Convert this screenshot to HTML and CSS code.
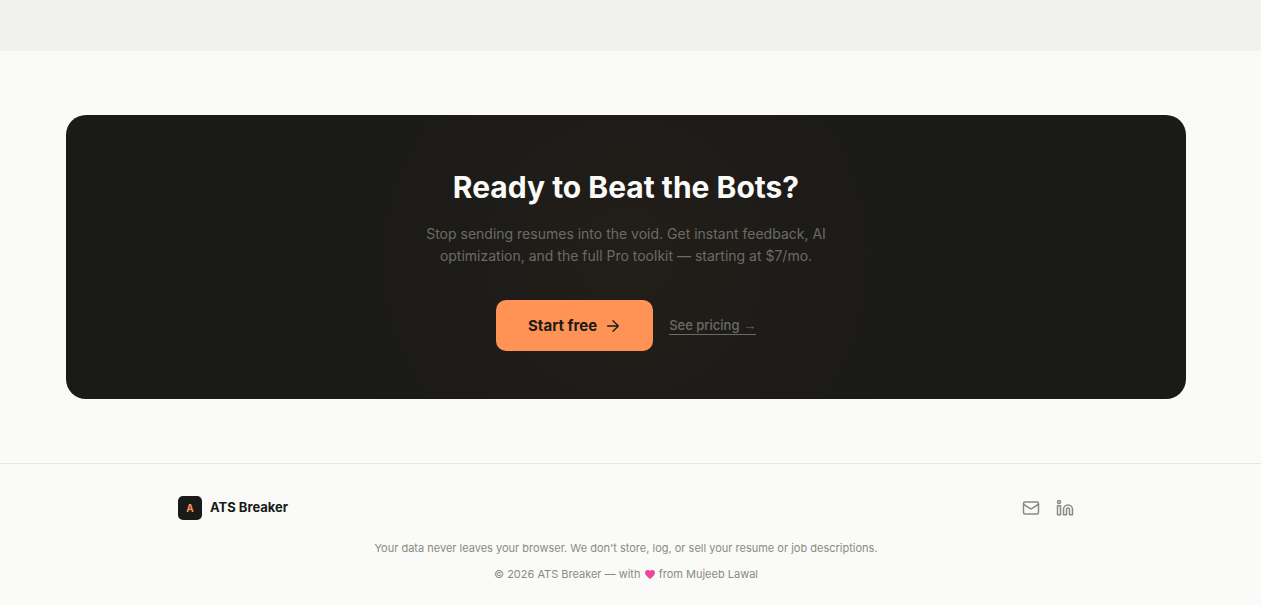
FILE: index.html
```html
<!DOCTYPE html>
<html lang="en">
<head>
<meta charset="utf-8">
<meta name="viewport" content="width=device-width, initial-scale=1">
<title>ATS Breaker</title>
<link rel="stylesheet" href="styles.css">
</head>
<body>
<div class="band"></div>
<main class="cta-section">
  <section class="cta">
    <h2 class="cta-title">Ready to Beat the Bots?</h2>
    <p class="cta-text">Stop sending resumes into the void. Get instant feedback, AI optimization, and the full Pro toolkit — starting at $7/mo.</p>
    <div class="cta-actions">
      <button class="start" type="button">Start free
        <svg width="16" height="16" viewBox="0 0 24 24" fill="none" stroke="currentColor" stroke-width="2" stroke-linecap="round" stroke-linejoin="round" aria-hidden="true"><path d="M4 12h16M12 4l8 8-8 8"/></svg>
      </button>
      <a class="pricing" href="#pricing">See pricing <span class="arrow">→</span></a>
    </div>
  </section>
</main>
<footer class="footer">
  <div class="footer-inner">
    <div class="footer-row">
      <a class="brand" href="#top"><span class="mark">A</span><span class="brand-name">ATS Breaker</span></a>
      <nav class="social" aria-label="Contact">
        <a href="#mail" aria-label="Email"><svg width="18" height="18" viewBox="0 0 24 24" fill="none" stroke="currentColor" stroke-width="2" stroke-linecap="round" stroke-linejoin="round"><rect x="2" y="4" width="20" height="16" rx="2"/><path d="M22 7l-8.970 5.700a1.940 1.940 0 0 1-2.060 0L2 7"/></svg></a>
        <a href="#linkedin" aria-label="LinkedIn"><svg width="18" height="18" viewBox="0 0 24 24" fill="none" stroke="currentColor" stroke-width="2" stroke-linecap="round" stroke-linejoin="round"><path d="M16 8a6 6 0 0 1 6 6v7h-4v-7a2 2 0 0 0-4 0v7h-4v-7a6 6 0 0 1 6-6z"/><rect x="2" y="9" width="4" height="12"/><circle cx="4" cy="4" r="2"/></svg></a>
      </nav>
    </div>
    <p class="note">Your data never leaves your browser. We don't store, log, or sell your resume or job descriptions.</p>
    <p class="note">© 2026 ATS Breaker — with <svg class="heart" width="10" height="9" viewBox="0 0 20 18" aria-label="love" role="img"><path d="M10 18C4 13 0 10 0 5.500C0 2 2.500 0 5.300 0C7.500 0 9 1 10 2.200C11 1 12.500 0 14.700 0C17.500 0 20 2 20 5.500C20 10 16 13 10 18z"/></svg> from Mujeeb Lawal</p>
  </div>
</footer>
</body>
</html>
```
FILE: styles.css
```css
* { box-sizing: border-box; }
body {
  margin: 0;
  background: #fafaf8;
  color: #1a1a18;
  font-family: Inter, "Liberation Sans", sans-serif;
}
h2, p { margin: 0; }
a { color: inherit; text-decoration: none; }
svg { display: block; }
.band { height: 51px; background: #f1f1ef; }
.cta-section { padding: 64px 33px 64px 24px; }
.cta {
  max-width: 1120px;
  margin: 0 auto;
  padding: 48px;
  border-radius: 20px;
  text-align: center;
  background: radial-gradient(circle 290px at 50% 50%, #221e19, #1a1a18) #1a1a18;
}
.cta-title {
  color: #fafaf8;
  font-size: 30px;
  font-weight: 700;
  line-height: 48px;
}
.cta-text {
  max-width: 420px;
  margin: 12px auto 33px;
  color: #6b6b66;
  font-size: 14px;
  line-height: 22px;
}
.cta-actions {
  display: flex;
  flex-wrap: wrap;
  align-items: center;
  justify-content: center;
  gap: 16px;
}
.start {
  display: flex;
  align-items: center;
  gap: 8px;
  padding: 14px 32px;
  border: 0;
  border-radius: 10px;
  background: #ff9255;
  color: #1a1a18;
  font-family: inherit;
  font-size: 15px;
  font-weight: 700;
  line-height: 23px;
}
.pricing {
  color: #6b6b66;
  border-bottom: 1px solid #6b6b66;
  font-size: 13px;
  font-weight: 500;
  line-height: 17px;
}
.arrow { font-family: "Liberation Sans", sans-serif; }
.footer { border-top: 1px solid #e5e5e2; padding: 32px 33px 16px 24px; }
.footer-inner { max-width: 896px; margin: 0 auto; }
.footer-row {
  display: flex;
  align-items: center;
  justify-content: space-between;
  margin-bottom: 16px;
}
.brand {
  display: flex;
  align-items: center;
  gap: 8px;
  font-size: 13px;
  font-weight: 700;
}
.brand-name { padding-bottom: 2px; }
.mark {
  width: 24px;
  border-radius: 5px;
  background: #1a1a18;
  color: #ff9255;
  font-size: 10px;
  line-height: 24px;
  text-align: center;
}
.social { display: flex; gap: 16px; color: #8a8a84; }
.note {
  margin-bottom: 2px;
  color: #8a8a84;
  font-size: 11px;
  line-height: 24px;
  text-align: center;
}
.heart { display: inline-block; margin: 0 1px; vertical-align: -1px; fill: #ec4899; }
```
